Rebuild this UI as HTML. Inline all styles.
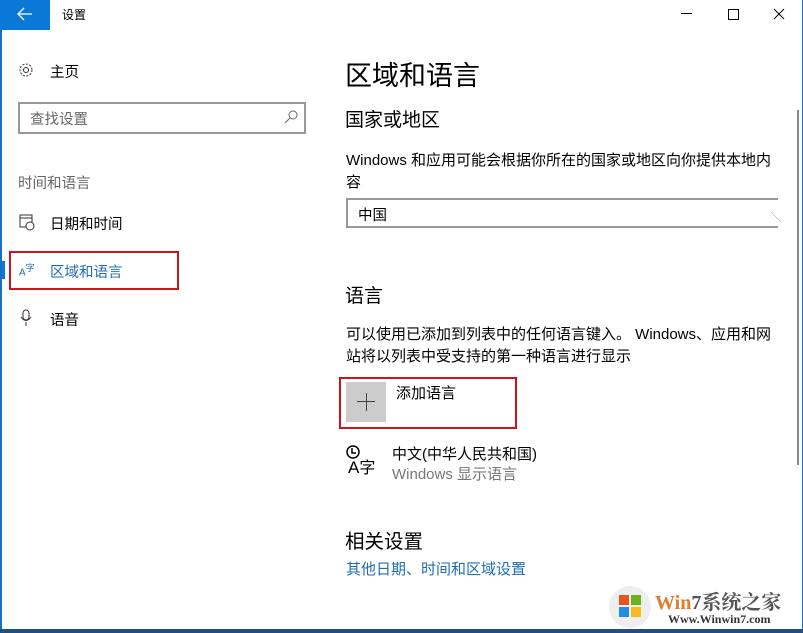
<!DOCTYPE html>
<html><head><meta charset="utf-8"><style>
body{margin:0;width:803px;height:633px;background:#fff;position:relative;overflow:hidden;font-family:"Liberation Sans","Noto Sans CJK SC",sans-serif;color:#000}
.a{position:absolute;white-space:nowrap}
</style></head><body>
<div class="a" style="left:0;top:0;width:2px;height:633px;background:#1a6fc0"></div>
<div class="a" style="right:0;top:0;width:1px;height:633px;background:#1a6fc0"></div>
<div class="a" style="left:0;top:0;width:50px;height:30px;background:#0a78d7"></div>
<svg class="a" style="left:17px;top:7px" width="16" height="14"><path d="M1 7H15M7 1L1 7L7 13" stroke="#fff" stroke-width="1.3" fill="none"/></svg>
<div class="a" style="left:62px;top:6px;font-size:12px">设置</div>
<div class="a" style="left:681px;top:13px;width:11px;height:1px;background:#000"></div>
<div class="a" style="left:728px;top:9px;width:9px;height:9px;border:1px solid #000"></div>
<svg class="a" style="left:773px;top:8px" width="12" height="12"><path d="M1 1L11 11M11 1L1 11" stroke="#000" stroke-width="1"/></svg>
<svg class="a" style="left:18px;top:62px" width="16" height="16"><circle cx="8" cy="8" r="2.5" fill="none" stroke="#333"/><circle cx="8" cy="8" r="6" fill="none" stroke="#333" stroke-dasharray="2 1.5"/></svg>
<div class="a" style="left:50px;top:61px;font-size:14.5px">主页</div>
<div class="a" style="left:18px;top:102px;width:284px;height:28px;border:2px solid #999"></div>
<div class="a" style="left:30px;top:108px;font-size:14.5px;color:#666">查找设置</div>
<svg class="a" style="left:284px;top:110px" width="14" height="14"><circle cx="9" cy="5" r="4" fill="none" stroke="#666"/><path d="M6 8L1 13" stroke="#666"/></svg>
<div class="a" style="left:18px;top:172px;font-size:14.5px;color:#666">时间和语言</div>
<svg class="a" style="left:19px;top:213px" width="16" height="18"><rect x="1" y="2" width="12" height="12" fill="none" stroke="#333"/><path d="M1 5H13" stroke="#333"/><circle cx="11" cy="13" r="4" fill="#fff" stroke="#333"/></svg>
<div class="a" style="left:50px;top:213px;font-size:14.5px">日期和时间</div>
<div class="a" style="left:2px;top:261px;width:3px;height:18px;background:#0a78d7"></div>
<div class="a" style="left:9px;top:251px;width:166px;height:35px;border:2px solid #d0141c"></div>
<div class="a" style="left:19px;top:261px;font-size:10px;color:#1f6eb5">A<sup style="font-size:9px">字</sup></div>
<div class="a" style="left:50px;top:261px;font-size:14.5px;color:#1f6eb5">区域和语言</div>
<svg class="a" style="left:20px;top:309px" width="12" height="18"><rect x="3" y="1" width="6" height="10" rx="3" fill="none" stroke="#333"/><path d="M1 8Q6 15 11 8M6 13V17" stroke="#333" fill="none"/></svg>
<div class="a" style="left:50px;top:309px;font-size:14.5px">语音</div>

<div class="a" style="left:345px;top:54px;font-size:27px">区域和语言</div>
<div class="a" style="left:345px;top:105px;font-size:19px">国家或地区</div>
<div class="a" style="left:346px;top:150px;font-size:15px;line-height:22px">Windows 和应用可能会根据你所在的国家或地区向你提供本地内<br>容</div>
<div class="a" style="left:346px;top:198px;width:432px;height:30px;border-top:2px solid #999;border-bottom:2px solid #999;border-left:2px solid #999;box-sizing:border-box"></div>
<div class="a" style="left:358px;top:204px;font-size:14.5px">中国</div>
<div class="a" style="left:771px;top:209px;font-size:10px;color:#888">╲</div>
<div class="a" style="left:797px;top:110px;width:2px;height:355px;background:#888"></div>
<div class="a" style="left:345px;top:281px;font-size:19px">语言</div>
<div class="a" style="left:346px;top:324px;font-size:15px;line-height:22px">可以使用已添加到列表中的任何语言键入。 Windows、应用和网<br>站将以列表中受支持的第一种语言进行显示</div>
<div class="a" style="left:339px;top:377px;width:174px;height:48px;border:2px solid #d0141c"></div>
<div class="a" style="left:346px;top:382px;width:40px;height:40px;background:#ccc"></div>
<div class="a" style="left:357px;top:401px;width:18px;height:1px;background:#444"></div>
<div class="a" style="left:366px;top:393px;width:1px;height:18px;background:#444"></div>
<div class="a" style="left:396px;top:382px;font-size:15px">添加语言</div>
<svg class="a" style="left:346px;top:444px" width="14" height="16"><circle cx="7" cy="8" r="6" fill="none" stroke="#000" stroke-width="1.5"/><path d="M6 4V9H10" stroke="#000" stroke-width="1.5" fill="none"/></svg>
<div class="a" style="left:348px;top:458px;font-size:17px;line-height:20px">A<span style="font-size:16px">字</span></div>
<div class="a" style="left:392px;top:443px;font-size:15px">中文(中华人民共和国)</div>
<div class="a" style="left:392px;top:463px;font-size:15px;color:#777">Windows 显示语言</div>
<div class="a" style="left:345px;top:525px;font-size:19.5px">相关设置</div>
<div class="a" style="left:346px;top:558px;font-size:15px;color:#1f6eb5">其他日期、时间和区域设置</div>
<svg class="a" style="left:607px;top:585px" width="46" height="44"><circle cx="23" cy="22" r="21" fill="#eee"/><rect x="12" y="10" width="10" height="10" fill="#e8541c"/><rect x="24" y="10" width="10" height="10" fill="#6bb120"/><rect x="12" y="22" width="10" height="10" fill="#1f8fe0"/><rect x="24" y="22" width="10" height="10" fill="#f9b81c"/></svg>
<div class="a" style="left:655px;top:586px;font-size:20px;font-weight:bold;font-family:'Liberation Serif','Noto Serif CJK SC',serif"><span style="color:#e37c2b">Win</span><span style="color:#555">7系统之家</span></div>
<div class="a" style="left:668px;top:612px;font-size:12px;font-family:'Liberation Serif',serif;font-weight:bold;color:#333">Www.Winwin7.com</div>
<div class="a" style="left:0;top:629px;width:803px;height:4px;background:#1f4f7e"></div>
</body></html>
